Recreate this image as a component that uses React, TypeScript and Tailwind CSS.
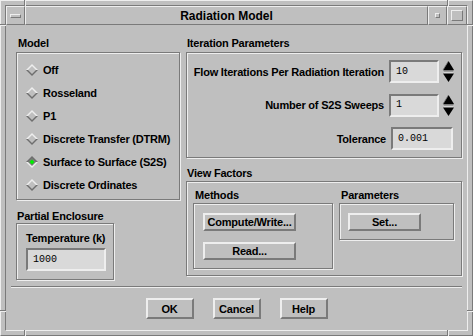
import React from "react";

const raised =
  "border-t-[#eeeeee] border-l-[#eeeeee] border-b-[#7a7a7a] border-r-[#7a7a7a]";
const sunken =
  "border-t-[#7a7a7a] border-l-[#7a7a7a] border-b-[#eeeeee] border-r-[#eeeeee]";
const etched =
  "border border-[#7a7a7a] shadow-[inset_1px_1px_0_#eeeeee,1px_1px_0_#eeeeee]";

function Diamond({ selected }: { selected?: boolean }) {
  return (
    <svg width="12" height="12" viewBox="0 0 12 12" className="shrink-0">
      <polygon points="6,0 12,6 0,6" fill={selected ? "#6e6e6e" : "#eeeeee"} />
      <polygon points="0,6 12,6 6,12" fill={selected ? "#eeeeee" : "#6e6e6e"} />
      <polygon points="6,2 10,6 6,10 2,6" fill={selected ? "#7a7a7a" : "#bfbfbf"} />
      {selected && <polygon points="6,3.5 8.5,6 6,8.5 3.5,6" fill="#00ee00" />}
    </svg>
  );
}

function Spinner() {
  return (
    <svg width="13" height="23" viewBox="0 0 13 23" className="shrink-0">
      <polygon points="6.5,1 12,10 1,10" fill="#000" />
      <polygon points="1,10 12,10 11,11.5 2,11.5" fill="#7a7a7a" />
      <polygon points="2,12.5 11,12.5 12,13.5 1,13.5" fill="#eeeeee" />
      <polygon points="1,13.5 12,13.5 6.5,22" fill="#000" />
      <line x1="6.5" y1="1" x2="1" y2="10" stroke="#7a7a7a" strokeWidth="0.8" />
    </svg>
  );
}

function Input({ value, w }: { value: string; w: string }) {
  return (
    <div
      className={`${w} h-[23px] bg-[#d9d9d9] border-2 ${sunken} flex items-center pl-[5px] font-['Liberation_Mono',monospace] text-[10px] font-normal tracking-normal`}
    >
      {value}
    </div>
  );
}

function Btn({ label, w, h }: { label: string; w: string; h: string }) {
  return (
    <div
      className={`${w} ${h} border-2 ${raised} bg-[#bfbfbf] flex items-center justify-center`}
    >
      {label}
    </div>
  );
}

function Radio({ label, selected }: { label: string; selected?: boolean }) {
  return (
    <div className="h-[23px] flex items-center gap-[5px]">
      <Diamond selected={selected} />
      <span>{label}</span>
    </div>
  );
}

function Notch({ className }: { className: string }) {
  return <div className={`absolute ${className}`} />;
}

export default function App() {
  return (
    <div className="w-[473px] h-[336px] bg-[#bfbfbf] relative text-black font-['Liberation_Sans',Arial,sans-serif] font-bold text-[11px] tracking-[-0.2px] leading-[14px]">
      {/* outer frame */}
      <div className={`w-full h-full border ${raised} p-[4px]`}>
        <div className={`w-full h-full border ${sunken} flex flex-col`}>
          {/* title bar */}
          <div className="h-[19px] flex shrink-0">
            <div className={`w-[19px] h-full border ${raised} flex items-center justify-center`}>
              <div className={`w-[11px] h-[4px] border ${raised}`} />
            </div>
            <div
              className={`flex-1 h-full border ${raised} flex items-center justify-center text-[12px] tracking-normal`}
            >
              Radiation Model
            </div>
            <div className={`w-[19px] h-full border ${raised} flex items-center justify-center`}>
              <div className={`w-[5px] h-[5px] border ${raised}`} />
            </div>
            <div className={`w-[20px] h-full border ${raised} flex items-center justify-center`}>
              <div className={`w-[12px] h-[11px] border ${raised}`} />
            </div>
          </div>

          {/* client area */}
          <div className="flex-1 flex flex-col px-[5px] pt-[11px]">
            <div className="flex gap-[6px] pl-[5px]">
              {/* left column */}
              <div className="w-[164px] flex flex-col">
                <div className="pl-[2px]">Model</div>
                <div className={`mt-[2px] h-[148px] ${etched} pt-[5px] pl-[9px]`}>
                  <Radio label="Off" />
                  <Radio label="Rosseland" />
                  <Radio label="P1" />
                  <Radio label="Discrete Transfer (DTRM)" />
                  <Radio label="Surface to Surface (S2S)" selected />
                  <Radio label="Discrete Ordinates" />
                </div>
                <div className="mt-[9px] pl-[1px]">Partial Enclosure</div>
                <div className={`w-[98px] h-[57px] ${etched} pt-[7px] pl-[9px]`}>
                  <div>Temperature (k)</div>
                  <div className="mt-[3px]">
                    <Input value="1000" w="w-[80px]" />
                  </div>
                </div>
              </div>

              {/* right column */}
              <div className="w-[276px] flex flex-col">
                <div className="pl-[1px]">Iteration Parameters</div>
                <div className={`mt-[2px] h-[106px] ${etched} pt-[7px] pr-[6px] flex flex-col gap-[10px]`}>
                  <div className="flex items-center justify-end">
                    <span>Flow Iterations Per Radiation Iteration</span>
                    <div className="ml-[5px]">
                      <Input value="10" w="w-[50px]" />
                    </div>
                    <div className="ml-[3px]">
                      <Spinner />
                    </div>
                  </div>
                  <div className="flex items-center justify-end h-[24px]">
                    <span>Number of S2S Sweeps</span>
                    <div className="ml-[5px]">
                      <Input value="1" w="w-[50px]" />
                    </div>
                    <div className="ml-[3px]">
                      <Spinner />
                    </div>
                  </div>
                  <div className="flex items-center justify-end">
                    <span>Tolerance</span>
                    <div className="ml-[5px]">
                      <Input value="0.001" w="w-[62px]" />
                    </div>
                    <div className="w-[2px]" />
                  </div>
                </div>

                <div className="mt-[8px] pl-[1px]">View Factors</div>
                <div className={`mt-[1px] h-[95px] ${etched} pt-[6px] pl-[6px] flex gap-[6px]`}>
                  <div className="w-[140px] flex flex-col">
                    <div className="pl-[2px]">Methods</div>
                    <div className={`mt-[1px] h-[66px] ${etched} pt-[9px] pl-[9px] flex flex-col gap-[11px]`}>
                      <Btn label="Compute/Write..." w="w-[93px]" h="h-[18px]" />
                      <Btn label="Read..." w="w-[93px]" h="h-[18px]" />
                    </div>
                  </div>
                  <div className="w-[115px] flex flex-col">
                    <div className="pl-[2px]">Parameters</div>
                    <div className={`mt-[1px] h-[37px] ${etched} pt-[9px] pl-[8px]`}>
                      <Btn label="Set..." w="w-[73px]" h="h-[18px]" />
                    </div>
                  </div>
                </div>
              </div>
            </div>

            {/* separator */}
            <div className="mt-[6px] border-t border-t-[#7a7a7a] border-b border-b-[#eeeeee]" />

            {/* bottom buttons */}
            <div className="mt-[10px] flex justify-center gap-[19px]">
              <Btn label="OK" w="w-[48px]" h="h-[21px]" />
              <Btn label="Cancel" w="w-[48px]" h="h-[21px]" />
              <Btn label="Help" w="w-[48px]" h="h-[21px]" />
            </div>
          </div>
        </div>
      </div>

      {/* frame corner notches */}
      <Notch className="left-[24px] top-0 w-[1px] h-[6px] bg-[#7a7a7a]" />
      <Notch className="left-[25px] top-0 w-[1px] h-[6px] bg-[#eeeeee]" />
      <Notch className="left-[447px] top-0 w-[1px] h-[6px] bg-[#7a7a7a]" />
      <Notch className="left-[448px] top-0 w-[1px] h-[6px] bg-[#eeeeee]" />
      <Notch className="left-[24px] bottom-0 w-[1px] h-[6px] bg-[#7a7a7a]" />
      <Notch className="left-[25px] bottom-0 w-[1px] h-[6px] bg-[#eeeeee]" />
      <Notch className="left-[447px] bottom-0 w-[1px] h-[6px] bg-[#7a7a7a]" />
      <Notch className="left-[448px] bottom-0 w-[1px] h-[6px] bg-[#eeeeee]" />
      <Notch className="left-0 top-[24px] w-[6px] h-[1px] bg-[#7a7a7a]" />
      <Notch className="left-0 top-[25px] w-[6px] h-[1px] bg-[#eeeeee]" />
      <Notch className="right-0 top-[24px] w-[6px] h-[1px] bg-[#7a7a7a]" />
      <Notch className="right-0 top-[25px] w-[6px] h-[1px] bg-[#eeeeee]" />
      <Notch className="left-0 top-[310px] w-[6px] h-[1px] bg-[#7a7a7a]" />
      <Notch className="left-0 top-[311px] w-[6px] h-[1px] bg-[#eeeeee]" />
      <Notch className="right-0 top-[310px] w-[6px] h-[1px] bg-[#7a7a7a]" />
      <Notch className="right-0 top-[311px] w-[6px] h-[1px] bg-[#eeeeee]" />
    </div>
  );
}
